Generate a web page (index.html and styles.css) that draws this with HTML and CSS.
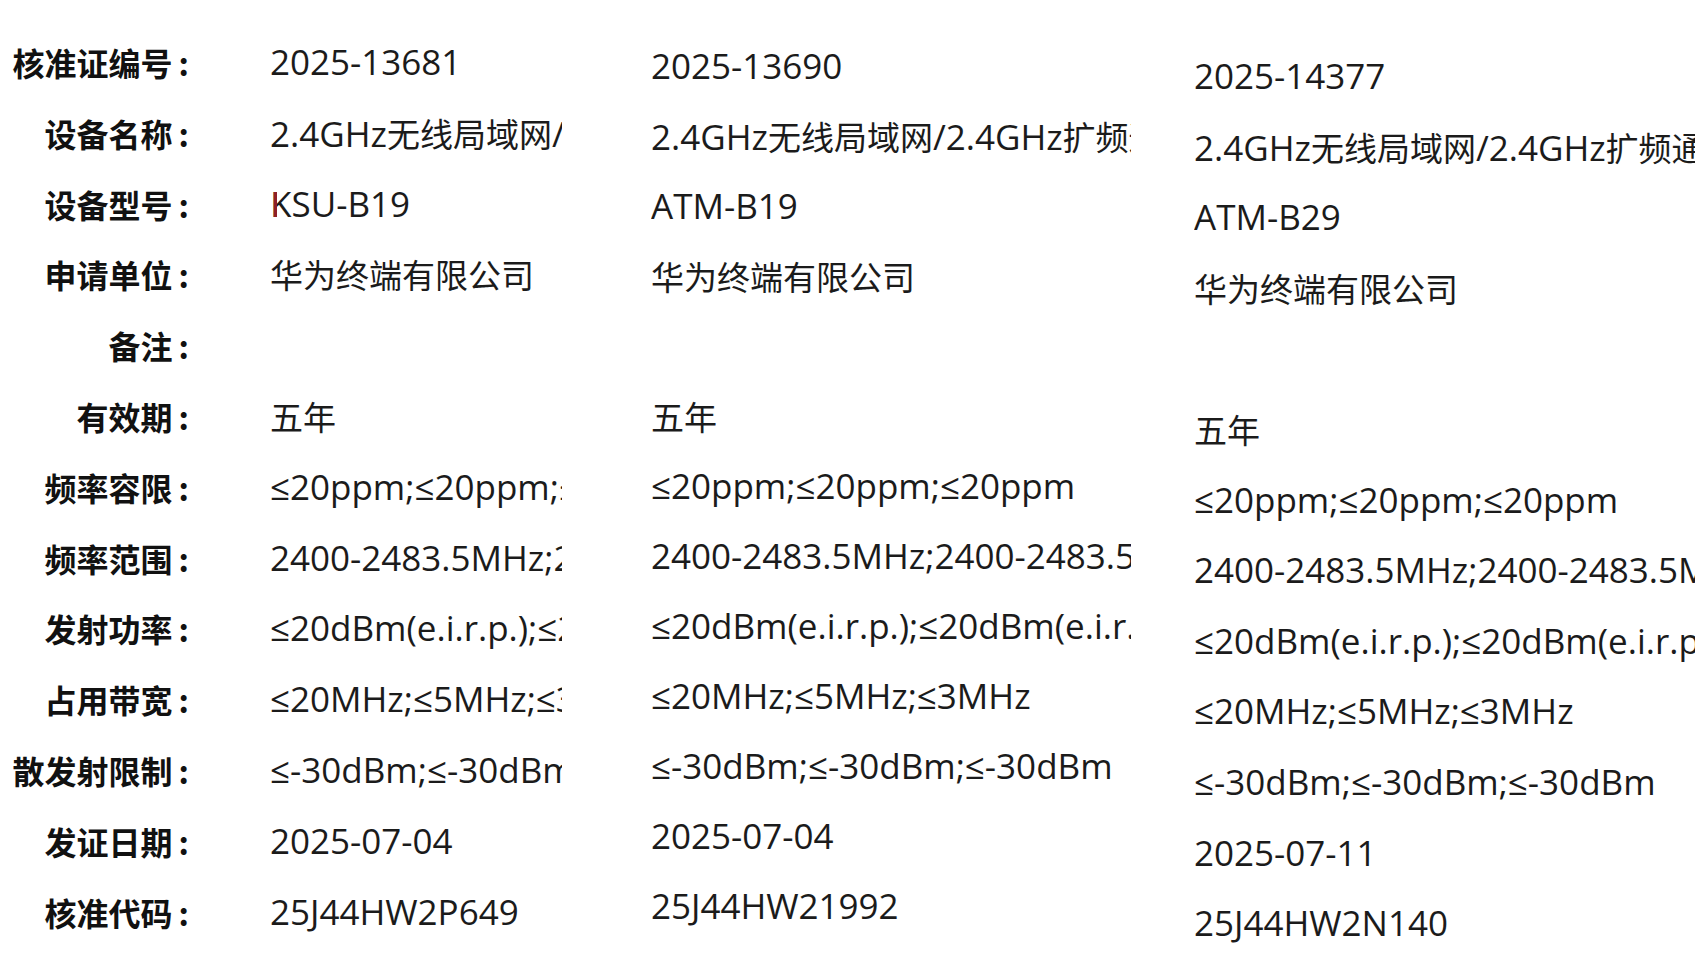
FILE: index.html
```html
<!DOCTYPE html>
<html lang="zh-CN">
<head>
<meta charset="utf-8">
<title>核准证信息</title>
<link rel="stylesheet" href="styles.css">
</head>
<body>
<div class="page">
  <section class="sheet sheet-1">
    <div class="label">核准证编号<span class="colon">:</span></div><div class="value">2025-13681</div>
    <div class="label">设备名称<span class="colon">:</span></div><div class="value">2.4GHz<span class="cjk">无线局域网</span>/2.4GHz<span class="cjk">扩频通信设备</span></div>
    <div class="label">设备型号<span class="colon">:</span></div><div class="value"><span class="cursor">K</span>SU-B19</div>
    <div class="label">申请单位<span class="colon">:</span></div><div class="value"><span class="cjk">华为终端有限公司</span></div>
    <div class="label">备注<span class="colon">:</span></div><div class="value"></div>
    <div class="label">有效期<span class="colon">:</span></div><div class="value"><span class="cjk">五年</span></div>
    <div class="label">频率容限<span class="colon">:</span></div><div class="value">≤20ppm;≤20ppm;≤20ppm</div>
    <div class="label">频率范围<span class="colon">:</span></div><div class="value">2400-2483.5MHz;2400-2483.5MHz;2400-2483.5MHz</div>
    <div class="label">发射功率<span class="colon">:</span></div><div class="value">≤20dBm(e.i.r.p.);≤20dBm(e.i.r.p.);≤20dBm(e.i.r.p.)</div>
    <div class="label">占用带宽<span class="colon">:</span></div><div class="value">≤20MHz;≤5MHz;≤3MHz</div>
    <div class="label">散发射限制<span class="colon">:</span></div><div class="value">≤-30dBm;≤-30dBm;≤-30dBm</div>
    <div class="label">发证日期<span class="colon">:</span></div><div class="value">2025-07-04</div>
    <div class="label">核准代码<span class="colon">:</span></div><div class="value">25J44HW2P649</div>
  </section>
  <section class="sheet sheet-2">
    <div class="value">2025-13690</div>
    <div class="value">2.4GHz<span class="cjk">无线局域网</span>/2.4GHz<span class="cjk">扩频通信设备</span></div>
    <div class="value">ATM-B19</div>
    <div class="value"><span class="cjk">华为终端有限公司</span></div>
    <div class="value"></div>
    <div class="value"><span class="cjk">五年</span></div>
    <div class="value">≤20ppm;≤20ppm;≤20ppm</div>
    <div class="value">2400-2483.5MHz;2400-2483.5MHz;2400-2483.5MHz</div>
    <div class="value">≤20dBm(e.i.r.p.);≤20dBm(e.i.r.p.);≤20dBm(e.i.r.p.)</div>
    <div class="value">≤20MHz;≤5MHz;≤3MHz</div>
    <div class="value">≤-30dBm;≤-30dBm;≤-30dBm</div>
    <div class="value">2025-07-04</div>
    <div class="value">25J44HW21992</div>
  </section>
  <section class="sheet sheet-3">
    <div class="value">2025-14377</div>
    <div class="value">2.4GHz<span class="cjk">无线局域网</span>/2.4GHz<span class="cjk">扩频通信设备</span></div>
    <div class="value">ATM-B29</div>
    <div class="value"><span class="cjk">华为终端有限公司</span></div>
    <div class="value"></div>
    <div class="value"><span class="cjk">五年</span></div>
    <div class="value">≤20ppm;≤20ppm;≤20ppm</div>
    <div class="value">2400-2483.5MHz;2400-2483.5MHz;2400-2483.5MHz</div>
    <div class="value">≤20dBm(e.i.r.p.);≤20dBm(e.i.r.p.);≤20dBm(e.i.r.p.)</div>
    <div class="value">≤20MHz;≤5MHz;≤3MHz</div>
    <div class="value">≤-30dBm;≤-30dBm;≤-30dBm</div>
    <div class="value">2025-07-11</div>
    <div class="value">25J44HW2N140</div>
  </section>
</div>
</body>
</html>
```
FILE: styles.css
```css
html, body {
  margin: 0;
  padding: 0;
  background: #ffffff;
}

body {
  width: 1706px;
  height: 959px;
  overflow: hidden;
  color: #1b1b1b;
  font-family: "Open Sans", "Noto Sans CJK SC", sans-serif;
}

.page {
  display: flex;
  flex-direction: row;
  align-items: flex-start;
  height: 959px;
}

.sheet {
  display: grid;
}

.sheet-1 {
  width: 651px;
  grid-template-columns: 191px 292px;
  column-gap: 79px;
  grid-auto-rows: 70.8px;
  padding-top: 26.6px;
}

.sheet-2 {
  width: 543px;
  grid-template-columns: 480px;
  grid-auto-rows: 70px;
  padding-top: 31px;
}

.sheet-3 {
  width: 512px;
  grid-template-columns: 501px;
  grid-auto-rows: 70.6px;
  padding-top: 40.7px;
}

.label {
  font-family: "Noto Sans CJK SC", sans-serif;
  font-weight: 700;
  font-size: 32px;
  line-height: 70px;
  text-align: right;
  white-space: nowrap;
  color: #111111;
  align-self: center;
  padding-right: 2px;
}

.colon {
  margin-left: 6px;
}

.value {
  font-size: 35px;
  line-height: 70px;
  white-space: nowrap;
  overflow: hidden;
  align-self: center;
  height: 70px;
}

.cjk {
  font-family: "Noto Sans CJK SC", sans-serif;
  font-size: 33px;
}

.cursor {
  position: relative;
}

.cursor::before {
  content: "";
  position: absolute;
  left: 4px;
  top: 12px;
  width: 3px;
  height: 25px;
  background: #8e1f27;
}
```
